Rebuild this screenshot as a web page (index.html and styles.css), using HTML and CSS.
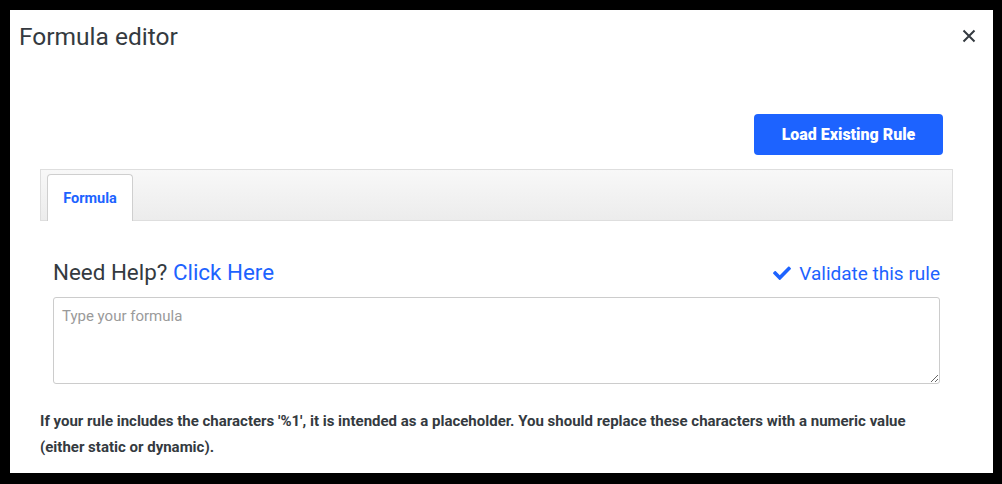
FILE: index.html
```html
<!DOCTYPE html>
<html lang="en">
<head>
<meta charset="utf-8">
<title>Formula editor</title>
<link rel="stylesheet" href="styles.css">
</head>
<body>
<div class="modal">
  <div class="modal-header">
    <h1 class="modal-title">Formula editor</h1>
    <button class="close" aria-label="Close">
      <svg width="14" height="14" viewBox="0 0 14 14"><path d="M1.5 1.5 L12.5 12.5 M12.5 1.5 L1.5 12.5" stroke="#343a40" stroke-width="2" stroke-linecap="butt" fill="none"/></svg>
    </button>
  </div>
  <div class="modal-body">
    <div class="toolbar">
      <button class="btn-primary">Load Existing Rule</button>
    </div>
    <div class="tabs">
      <div class="tab active">Formula</div>
    </div>
    <div class="pane">
      <div class="help-row">
        <div class="help">Need Help? <a href="#" class="link">Click Here</a></div>
        <a href="#" class="link validate">
          <svg width="18" height="14" viewBox="0 0 512 400"><path fill="#1d63ff" d="M173.9 389.4L7.5 223c-10-10-10-26.2 0-36.2l36.2-36.2c10-10 26.2-10 36.2 0L192 262.7 432.1 22.6c10-10 26.2-10 36.2 0l36.2 36.2c10 10 10 26.2 0 36.2L210.1 389.4c-10 10-26.2 10-36.2 0z"/></svg>
          Validate this rule
        </a>
      </div>
      <textarea class="formula" placeholder="Type your formula"></textarea>
    </div>
    <p class="note">If your rule includes the characters '%1', it is intended as a placeholder. You should replace these characters with a numeric value (either static or dynamic).</p>
  </div>
</div>
</body>
</html>
```
FILE: styles.css
```css
html, body {
  margin: 0;
  padding: 0;
  background: #000;
}
body {
  font-family: Roboto, "Liberation Sans", sans-serif;
  color: #343a40;
}
.modal {
  margin: 10px 0 0 10px;
  width: 983px;
  height: 463px;
  background: #fff;
  box-sizing: border-box;
}
.modal-header {
  display: flex;
  justify-content: space-between;
  align-items: flex-start;
  padding: 12px 17px 0 9px;
}
.modal-title {
  margin: 0;
  font-size: 24.5px;
  font-weight: 400;
  line-height: 29px;
  color: #343a40;
}
.close {
  border: 0;
  background: none;
  padding: 0;
  margin-top: 7px;
  width: 14px;
  height: 14px;
  display: flex;
}
.modal-body {
  padding: 0 40px 0 30px;
}
.toolbar {
  display: flex;
  justify-content: flex-end;
  padding-right: 10px;
  margin-top: 63px;
}
.btn-primary {
  width: 189px;
  height: 41px;
  border: 0;
  border-radius: 4px;
  background: #1d63ff;
  color: #fff;
  font-family: Roboto, "Liberation Sans", sans-serif;
  font-weight: 900;
  font-size: 16px;
  padding: 0;
}
.tabs {
  margin-top: 14px;
  height: 52px;
  box-sizing: border-box;
  border: 1px solid #dedede;
  background: linear-gradient(#f8f8f8, #ececec);
  padding: 5px 0 0 6px;
  display: flex;
  align-items: flex-end;
}
.tab {
  width: 86px;
  height: 47px;
  box-sizing: border-box;
  background: #fff;
  border: 1px solid #cfcfcf;
  border-bottom: 0;
  border-radius: 4px 4px 0 0;
  color: #1d63ff;
  font-weight: 700;
  font-size: 14.5px;
  display: flex;
  justify-content: center;
  align-items: center;
  margin-bottom: -1px;
}
.pane {
  padding: 37px 13px 0 13px;
}
.help-row {
  display: flex;
  justify-content: space-between;
  align-items: baseline;
  height: 32px;
}
.help {
  font-size: 22.4px;
  line-height: 29px;
  color: #343a40;
}
.link {
  color: #1d63ff;
  text-decoration: none;
}
.validate {
  font-size: 19px;
  display: flex;
  align-items: center;
  gap: 8px;
}
.formula {
  display: block;
  margin-top: 7px;
  width: 100%;
  height: 87px;
  box-sizing: border-box;
  border: 1px solid #ccc;
  border-radius: 3px;
  padding: 9px 8px;
  font-family: Roboto, "Liberation Sans", sans-serif;
  font-size: 15px;
  resize: vertical;
}
.formula::placeholder {
  color: #9a9a9a;
}
.note {
  margin: 24px 0 0 0;
  max-width: 900px;
  font-size: 15px;
  font-weight: 700;
  line-height: 26px;
  color: #343a40;
}
```
